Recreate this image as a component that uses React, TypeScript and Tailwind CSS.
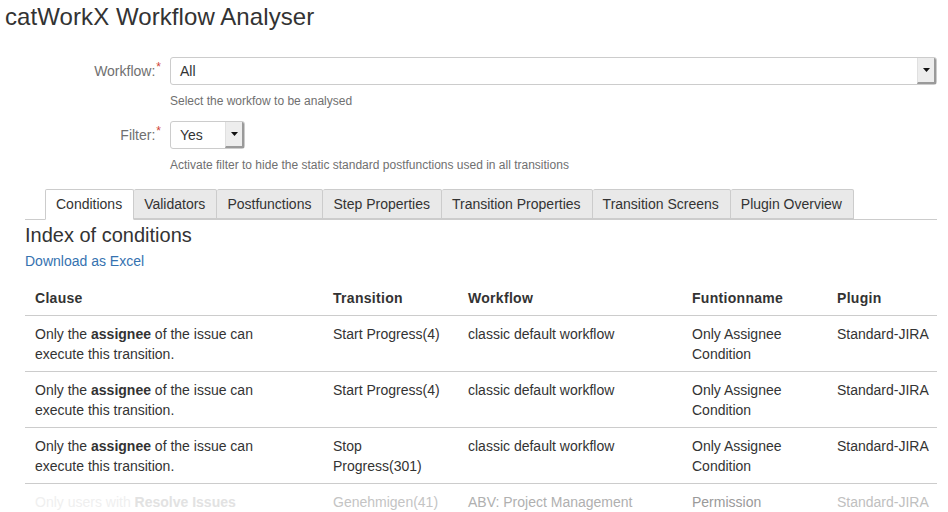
import React from "react";

function SelectBox({ value, widthClass }: { value: string; widthClass: string }) {
  return (
    <div className={`${widthClass} h-[28px] flex items-stretch border border-[#cccccc] rounded-[3px] bg-white`}>
      <div className="flex-1 flex items-center pl-[9px] text-[14px] text-[#333333]">{value}</div>
      <div className="w-[19px] flex items-center justify-center bg-[#ededed] border-l border-[#e0e0e0] border-r-2 border-b-2 border-r-[#9a9a9a] border-b-[#9a9a9a] rounded-tr-[2px]">
        <svg width="7" height="4" viewBox="0 0 7 4">
          <polygon points="0,0 7,0 3.5,4" fill="#111" />
        </svg>
      </div>
    </div>
  );
}

function FormRow({
  label,
  value,
  widthClass,
  help,
}: {
  label: string;
  value: string;
  widthClass: string;
  help: string;
}) {
  return (
    <div className="flex">
      <div className="w-[170px] shrink-0 flex justify-end pr-[9px] pt-[5px]">
        <span className="text-[14px] text-[#707070] leading-[18px]">{label}</span>
        <span className="text-[12px] text-[#d04437] leading-[10px] ml-[1px]">*</span>
      </div>
      <div className="flex-1 flex flex-col">
        <SelectBox value={value} widthClass={widthClass} />
        <div className="text-[12px] text-[#707070] leading-[16px] mt-[8px]">{help}</div>
      </div>
    </div>
  );
}

const tabs = [
  "Conditions",
  "Validators",
  "Postfunctions",
  "Step Properties",
  "Transition Properties",
  "Transition Screens",
  "Plugin Overview",
];

type Row = {
  transition: string;
  workflow: string;
  fn: string;
  plugin: string;
};

const rows: Row[] = [
  { transition: "Start Progress(4)", workflow: "classic default workflow", fn: "Only Assignee Condition", plugin: "Standard-JIRA" },
  { transition: "Start Progress(4)", workflow: "classic default workflow", fn: "Only Assignee Condition", plugin: "Standard-JIRA" },
  { transition: "Stop Progress(301)", workflow: "classic default workflow", fn: "Only Assignee Condition", plugin: "Standard-JIRA" },
];

export default function App() {
  return (
    <div
      className="w-[948px] h-[512px] overflow-hidden bg-white text-[#333333]"
      style={{ fontFamily: '"Liberation Sans", Arial, sans-serif' }}
    >
      <h1 className="text-[24px] leading-[28px] font-normal text-[#333333] pl-[5px] pt-[3px] tracking-[0.08px]">
        catWorkX Workflow Analyser
      </h1>

      <div className="mt-[26px] flex flex-col gap-[12px] pr-[11px]">
        <FormRow label="Workflow:" value="All" widthClass="w-[767px]" help="Select the workfow to be analysed" />
        <FormRow
          label="Filter:"
          value="Yes"
          widthClass="w-[75px]"
          help="Activate filter to hide the static standard postfunctions used in all transitions"
        />
      </div>

      <div className="ml-[25px] mr-[11px] mt-[16px]">
        <div className="flex border-b border-[#cccccc] pl-[20px] h-[31px]">
          {tabs.map((t, i) => (
            <div
              key={t}
              className={
                i === 0
                  ? "h-[31px] pl-[10px] pr-[11px] flex items-center text-[14px] text-[#333333] bg-white border border-[#cccccc] border-b-white rounded-t-[2px]"
                  : "h-[30px] pl-[10px] pr-[11px] flex items-center text-[14px] text-[#333333] bg-[#e9e9e9] border border-[#cccccc] border-l-0 rounded-t-[2px]"
              }
            >
              {t}
            </div>
          ))}
        </div>

        <h2 className="text-[20px] leading-[24px] font-normal text-[#333333] mt-[3px]">Index of conditions</h2>
        <div className="text-[14px] leading-[18px] text-[#3572b0] mt-[5px]">Download as Excel</div>

        <table className="w-[912px] table-fixed border-collapse mt-[10px] text-[14px] leading-[20px]">
          <colgroup>
            <col className="w-[298px]" />
            <col className="w-[135px]" />
            <col className="w-[224px]" />
            <col className="w-[145px]" />
            <col className="w-[110px]" />
          </colgroup>
          <thead>
            <tr className="border-b border-[#cccccc]">
              {["Clause", "Transition", "Workflow", "Funtionname", "Plugin"].map((h) => (
                <th key={h} className="text-left font-bold pl-[10px] pr-[4px] pt-[8px] pb-[7px] text-[#333333] tracking-[0.3px]">
                  {h}
                </th>
              ))}
            </tr>
          </thead>
          <tbody>
            {rows.map((r, i) => (
              <tr key={i} className="border-b border-[#cccccc] align-top">
                <td className="pl-[10px] pr-[30px] pt-[8px] pb-[7px]">
                  Only the <b>assignee</b> of the issue can execute this transition.
                </td>
                <td className="pl-[10px] pr-[10px] pt-[8px] pb-[7px]">{r.transition}</td>
                <td className="pl-[10px] pr-[10px] pt-[8px] pb-[7px]">{r.workflow}</td>
                <td className="pl-[10px] pr-[10px] pt-[8px] pb-[7px]">{r.fn}</td>
                <td className="pl-[10px] pr-[2px] pt-[8px] pb-[7px] whitespace-nowrap">{r.plugin}</td>
              </tr>
            ))}
            <tr className="align-top">
              <td className="pl-[10px] pr-[30px] pt-[8px] pb-[7px] text-[#efefef] whitespace-nowrap">
                Only users with <b className="text-[#e2e2e2]">Resolve Issues</b>
              </td>
              <td className="pl-[10px] pr-[10px] pt-[8px] pb-[7px] text-[#c4c4c4] whitespace-nowrap">Genehmigen(41)</td>
              <td className="pl-[10px] pr-[10px] pt-[8px] pb-[7px] text-[#b0b0b0] whitespace-nowrap">ABV: Project Management</td>
              <td className="pl-[10px] pr-[10px] pt-[8px] pb-[7px] text-[#9a9a9a]">Permission</td>
              <td className="pl-[10px] pr-[2px] pt-[8px] pb-[7px] text-[#c0c0c0] whitespace-nowrap">Standard-JIRA</td>
            </tr>
          </tbody>
        </table>
      </div>
    </div>
  );
}
